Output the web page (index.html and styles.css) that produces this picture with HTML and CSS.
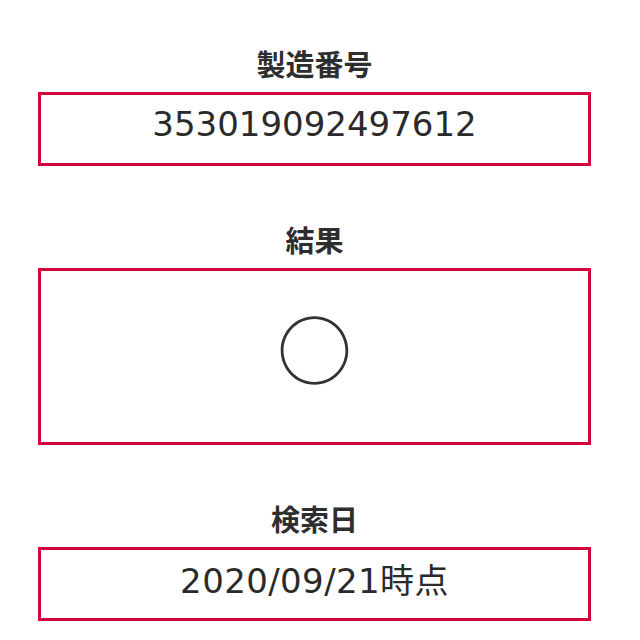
FILE: index.html
```html
<!DOCTYPE html>
<html lang="ja">
<head>
<meta charset="utf-8">
<title>検索結果</title>
<link rel="stylesheet" href="styles.css">
</head>
<body>
<main class="page">
  <section class="field">
    <h2 class="label">製造番号</h2>
    <div class="box box-value">353019092497612</div>
  </section>
  <section class="field">
    <h2 class="label">結果</h2>
    <div class="box box-result"><span class="mark">○</span></div>
  </section>
  <section class="field">
    <h2 class="label">検索日</h2>
    <div class="box box-value box-date">2020/09/21時点</div>
  </section>
</main>
</body>
</html>
```
FILE: styles.css
```css
html, body {
  margin: 0;
  padding: 0;
  background: #ffffff;
}
body {
  font-family: "DejaVu Sans", "Noto Sans CJK JP", sans-serif;
  color: #2b2b2b;
}
.page {
  width: 553px;
  margin-left: 38px;
  padding-top: 45px;
  display: flex;
  flex-direction: column;
  gap: 55px;
}
.field {
  display: flex;
  flex-direction: column;
  gap: 11px;
}
.label {
  margin: 0;
  height: 36px;
  line-height: 36px;
  font-family: "Noto Sans CJK JP", sans-serif;
  font-weight: 700;
  font-size: 29px;
  text-align: center;
  color: #2e2e2e;
}
.box {
  border: 3px solid #d2063c;
  box-sizing: border-box;
  text-align: center;
}
.box-value {
  height: 74px;
  padding: 9px 0 0;
  font-size: 34px;
  line-height: 40px;
  font-family: "DejaVu Sans", "Noto Sans CJK JP", sans-serif;
  color: #2a2a2a;
}
.box-date {
  padding-top: 11px;
  letter-spacing: 0.4px;
}
.box-result {
  height: 177px;
  display: flex;
  align-items: center;
  justify-content: center;
  padding-bottom: 21px;
}
.mark {
  font-family: "Noto Sans CJK JP", sans-serif;
  font-size: 75px;
  line-height: 1;
  color: #333333;
}
```
